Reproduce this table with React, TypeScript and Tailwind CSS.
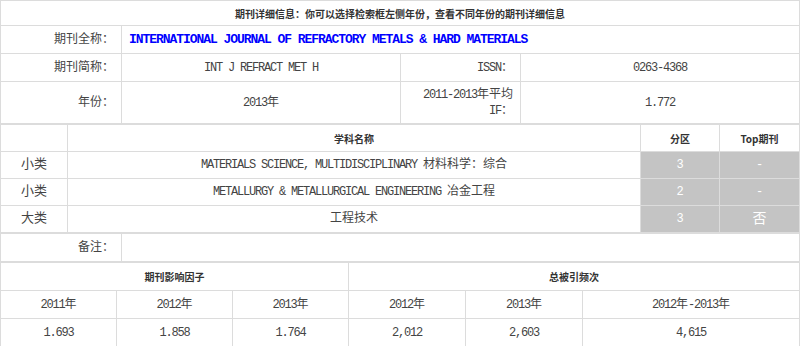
import React from 'react';

// SimSun-like look: mono latin squeezed to half-em, CJK from Noto
const base = "font-['Liberation_Mono','Noto_Sans_CJK_SC',monospace] text-[12px] text-[#444]";
const cell = 'border border-[#dcdcdc] text-center align-middle p-0';
const head = "font-['Noto_Sans_CJK_SC',sans-serif] text-[10px] font-bold text-[#333]";

const L: React.FC<{ children: React.ReactNode }> = ({ children }) => (
  <span className="tracking-[-1.2px]">{children}</span>
);

const App: React.FC = () => {
  return (
    <div className={`w-[800px] h-[346px] overflow-hidden bg-white ${base}`}>
      {/* basic info */}
      <table className="w-full table-fixed border-collapse">
        <colgroup>
          <col className="w-[121px]" />
          <col className="w-[279px]" />
          <col className="w-[120px]" />
          <col />
        </colgroup>
        <tbody>
          <tr className="h-[25px]">
            <td colSpan={4} className={`${cell} ${head}`}>
              期刊详细信息：你可以选择检索框左侧年份，查看不同年份的期刊详细信息
            </td>
          </tr>
          <tr className="h-[28px]">
            <td className={`${cell} text-right pr-[7px]`}>期刊全称：</td>
            <td colSpan={3} className={`${cell} text-left pl-[7px] font-bold text-[13px] text-[#0000ff]`}>
              <span className="tracking-[-1.05px]">INTERNATIONAL JOURNAL OF REFRACTORY METALS &amp; HARD MATERIALS</span>
            </td>
          </tr>
          <tr className="h-[28px]">
            <td className={`${cell} text-right pr-[7px]`}>期刊简称：</td>
            <td className={cell}><L>INT J REFRACT MET H</L></td>
            <td className={`${cell} text-right pr-[7px]`}><L>ISSN</L>：</td>
            <td className={cell}><L>0263-4368</L></td>
          </tr>
          <tr className="h-[42px]">
            <td className={`${cell} text-right pr-[7px]`}>年份：</td>
            <td className={cell}><L>2013</L>年</td>
            <td className={`${cell} text-right pr-[7px] leading-[16px]`}>
              <L>2011-2013</L>年平均<br />
              <L>IF</L>：
            </td>
            <td className={cell}><L>1.772</L></td>
          </tr>
        </tbody>
      </table>

      {/* subject categories */}
      <table className="w-full table-fixed border-collapse">
        <colgroup>
          <col className="w-[67px]" />
          <col />
          <col className="w-[79px]" />
          <col className="w-[80px]" />
        </colgroup>
        <tbody>
          <tr className="h-[27px]">
            <td className={cell}></td>
            <td className={`${cell} ${head}`}>学科名称</td>
            <td className={`${cell} ${head}`}>分区</td>
            <td className={`${cell} ${head}`}>Top期刊</td>
          </tr>
          {[
            ['小类', <><L>MATERIALS SCIENCE, MULTIDISCIPLINARY </L> 材料科学：综合</>, '3', '-'],
            ['小类', <><L>METALLURGY &amp; METALLURGICAL ENGINEERING </L> 冶金工程</>, '2', '-'],
            ['大类', <>工程技术</>, '3', '否'],
          ].map(([kind, name, zone, top], i) => (
            <tr key={i} className="h-[27px]">
              <td className={`${cell} text-[13px]`}>{kind}</td>
              <td className={cell}>{name}</td>
              <td className={`${cell} bg-[#c4c4c4] text-white`}>{zone}</td>
              <td className={`${cell} bg-[#c4c4c4] text-white ${top === '否' ? 'text-[14px]' : ''}`}>{top}</td>
            </tr>
          ))}
        </tbody>
      </table>

      {/* remarks */}
      <table className="w-full table-fixed border-collapse">
        <colgroup>
          <col className="w-[121px]" />
          <col />
        </colgroup>
        <tbody>
          <tr className="h-[28px]">
            <td className={`${cell} text-right pr-[7px]`}>备注：</td>
            <td className={cell}></td>
          </tr>
        </tbody>
      </table>

      {/* impact factor / citations */}
      <table className="w-full table-fixed border-collapse">
        <colgroup>
          <col className="w-[116px]" />
          <col className="w-[116px]" />
          <col className="w-[116px]" />
          <col className="w-[117px]" />
          <col className="w-[117px]" />
          <col />
        </colgroup>
        <tbody>
          <tr className="h-[28px]">
            <td colSpan={3} className={`${cell} ${head}`}>期刊影响因子</td>
            <td colSpan={3} className={`${cell} ${head}`}>总被引频次</td>
          </tr>
          <tr className="h-[28px]">
            <td className={cell}><L>2011</L>年</td>
            <td className={cell}><L>2012</L>年</td>
            <td className={cell}><L>2013</L>年</td>
            <td className={cell}><L>2012</L>年</td>
            <td className={cell}><L>2013</L>年</td>
            <td className={cell}><L>2012</L>年<L>-2013</L>年</td>
          </tr>
          <tr className="h-[28px]">
            <td className={cell}><L>1.693</L></td>
            <td className={cell}><L>1.858</L></td>
            <td className={cell}><L>1.764</L></td>
            <td className={cell}><L>2,012</L></td>
            <td className={cell}><L>2,603</L></td>
            <td className={cell}><L>4,615</L></td>
          </tr>
        </tbody>
      </table>
    </div>
  );
};

export default App;
